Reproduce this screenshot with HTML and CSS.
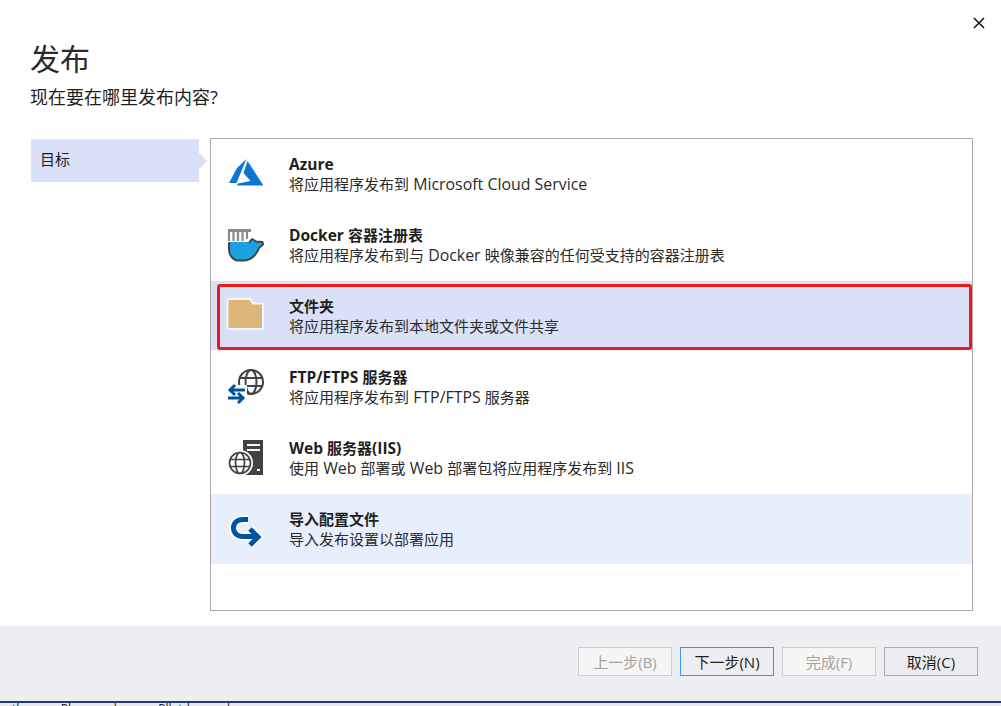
FILE: index.html
```html
<!DOCTYPE html>
<html lang="zh-CN">
<head>
<meta charset="utf-8">
<title>发布</title>
<link rel="stylesheet" href="styles.css">
</head>
<body>
<div class="dialog">
  <button class="close" aria-label="关闭">
    <svg width="12" height="12" viewBox="0 0 12 12"><path d="M1 1L11 11M11 1L1 11" stroke="#1a1a1a" stroke-width="1.6" fill="none"/></svg>
  </button>
  <header class="head">
    <h1 class="title">发布</h1>
    <p class="subtitle">现在要在哪里发布内容?</p>
  </header>
  <main class="main">
    <nav class="side">
      <div class="step">目标</div>
    </nav>
    <section class="panel">
      <div class="row">
        <svg class="icon" viewBox="0 0 40 40">
          <path d="M20.500 5L11 14L3 29H10.500Z" fill="#0a78d2"/>
          <path d="M21.500 7L17.500 19L24.500 27L12 29.500L11 31.500H37.500Z" fill="#0a78d2"/>
        </svg>
        <div class="text"><div class="name"><span class="en">Azure</span></div><div class="desc">将应用程序发布到<span class="en"> Microsoft Cloud Service</span></div></div>
      </div>
      <div class="row">
        <svg class="icon" viewBox="0 0 40 40">
          <path d="M2 4H25V7H2Z" fill="#8a8a8a"/>
          <path d="M3 7V16M7.500 7V16M12 7V16M16.500 7V16M21 7V14" stroke="#8a8a8a" stroke-width="2.200" fill="none"/>
          <path d="M3 18H23L26 14L30 16.500L36.500 17L37 19.500L33 23C30 31 24 35.500 18 35.500H12C7 35.500 3 30 3 24Z" fill="#1ba1e2" stroke="#424242" stroke-width="2" stroke-linejoin="round"/>
          <path d="M4 17H23V19.500H4Z" fill="#1ba1e2"/>
        </svg>
        <div class="text"><div class="name"><span class="en">Docker </span>容器注册表</div><div class="desc">将应用程序发布到与<span class="en"> Docker </span>映像兼容的任何受支持的容器注册表</div></div>
      </div>
      <div class="row selected">
        <svg class="icon" viewBox="0 0 40 40">
          <path d="M1.500 4.500Q1.500 3 3 3H24L27 7.500H36Q37 7.500 37 9V32Q37 33 36 33H3Q1.500 33 1.500 32Z" fill="#dcb67a" stroke="#f6f6f6" stroke-width="2"/>
        </svg>
        <div class="text"><div class="name">文件夹</div><div class="desc">将应用程序发布到本地文件夹或文件共享</div></div>
        <div class="mark"></div>
      </div>
      <div class="row">
        <svg class="icon" viewBox="0 0 40 40">
          <g fill="none" stroke="#424242" stroke-width="2">
            <circle cx="25" cy="15" r="12"/>
            <ellipse cx="25" cy="15" rx="5.500" ry="12"/>
            <path d="M14 11H36M14 19H36"/>
          </g>
          <path d="M1 18H21V37H1Z" fill="#fff"/>
          <g fill="none" stroke="#00539c" stroke-width="3">
            <path d="M4 23H19M9 18L4 23L9 28"/>
            <path d="M2 31H17M12 26L17 31L12 36"/>
          </g>
        </svg>
        <div class="text"><div class="name"><span class="en">FTP/FTPS </span>服务器</div><div class="desc">将应用程序发布到<span class="en"> FTP/FTPS </span>服务器</div></div>
      </div>
      <div class="row">
        <svg class="icon" viewBox="0 0 40 40">
          <path d="M17 2H37V37H17Z" fill="#424242"/>
          <path d="M21 6H34V8H21ZM21 11H34V13H21ZM31 31H34V33H31Z" fill="#f6f6f6"/>
          <circle cx="14" cy="25" r="13" fill="#fff"/>
          <g fill="none" stroke="#424242" stroke-width="1.700">
            <circle cx="14" cy="25" r="10.500"/>
            <ellipse cx="14" cy="25" rx="4.500" ry="10.500"/>
            <path d="M4 21.500H24M4 28.500H24"/>
          </g>
        </svg>
        <div class="text"><div class="name"><span class="en">Web </span>服务器<span class="en">(IIS)</span></div><div class="desc">使用<span class="en"> Web </span>部署或<span class="en"> Web </span>部署包将应用程序发布到<span class="en"> IIS</span></div></div>
      </div>
      <div class="row imported">
        <svg class="icon" viewBox="0 0 40 40">
          <g fill="none">
            <path d="M22 10.500H17C11 10.500 7.500 14 7.500 19C7.500 24 11.500 27.500 16 27.500H30" stroke="#fff" stroke-width="9"/>
            <path d="M24 20L32 28L24 36" stroke="#fff" stroke-width="9"/>
            <path d="M22 10.500H17C11 10.500 7.500 14 7.500 19C7.500 24 11.500 27.500 16 27.500H30" stroke="#00539c" stroke-width="5"/>
            <path d="M24 20L32 28L24 36" stroke="#00539c" stroke-width="5"/>
          </g>
        </svg>
        <div class="text"><div class="name">导入配置文件</div><div class="desc">导入发布设置以部署应用</div></div>
      </div>
    </section>
  </main>
  <footer class="foot">
    <button class="btn off">上一步(B)</button>
    <button class="btn primary">下一步(N)</button>
    <button class="btn off">完成(F)</button>
    <button class="btn">取消(C)</button>
  </footer>
  <div class="behind"><span class="behind-text">th Pl ch Pllatd h</span></div>
</div>
</body>
</html>
```
FILE: styles.css
```css
html, body {
  margin: 0;
  padding: 0;
  height: 100%;
  overflow: hidden;
  background: #fff;
}
.dialog {
  position: relative;
  width: 1001px;
  height: 706px;
  display: flex;
  flex-direction: column;
  font-family: "Open Sans", "Noto Sans CJK SC", sans-serif;
  color: #1e1e1e;
  overflow: hidden;
}
.close {
  position: absolute;
  top: 17px;
  right: 16px;
  width: 12px;
  height: 12px;
  padding: 0;
  border: 0;
  background: none;
  display: block;
}
.close svg { display: block; }
.head {
  height: 139px;
  padding: 41px 0 0 30px;
  box-sizing: border-box;
  flex: none;
}
.title {
  margin: 0;
  font-size: 30px;
  font-weight: 400;
  line-height: 36px;
  color: #2a2a2a;
}
.subtitle {
  margin: 6px 0 0;
  font-size: 18px;
  line-height: 28px;
}
.main {
  flex: none;
  height: 487px;
  display: flex;
  padding-left: 31px;
  box-sizing: border-box;
}
.side {
  width: 168px;
  margin-right: 11px;
  flex: none;
}
.step {
  position: relative;
  height: 43px;
  line-height: 41px;
  padding-left: 9px;
  background: #d9e0f7;
  font-size: 15px;
}
.step::after {
  content: "";
  position: absolute;
  left: 100%;
  top: 14px;
  border-left: 8px solid #d9e0f7;
  border-top: 8px solid transparent;
  border-bottom: 8px solid transparent;
}
.panel {
  width: 763px;
  height: 473px;
  margin-top: -1px;
  box-sizing: border-box;
  border: 1px solid #aaaaaa;
  display: flex;
  flex-direction: column;
  gap: 1px;
  background: #fff;
}
.row {
  position: relative;
  height: 70px;
  flex: none;
  display: flex;
  align-items: center;
  padding-left: 15px;
  box-sizing: border-box;
}
.icon {
  width: 40px;
  height: 40px;
  flex: none;
  margin-right: 23px;
}
.text {
  font-size: 15px;
  line-height: 20px;
}
.name { font-weight: 700; }
.name .en { font-size: 15.500px; }
.desc { color: #2a2a2a; }
.desc .en { font-size: 15.900px; }
.selected {
  height: 69px;
  margin-bottom: 1px;
  background: #d9e0f7;
}
.imported { background: #e8effc; }
.mark {
  position: absolute;
  left: 6px;
  right: 0;
  top: 3px;
  bottom: 0;
  border: 3px solid #f01818;
  border-radius: 3px;
}
.foot {
  flex: none;
  height: 77px;
  background: #eeeef2;
  border-bottom: 2px solid #1f3a78;
  display: flex;
  align-items: flex-start;
  justify-content: flex-end;
  gap: 8px;
  padding: 21px 23px 0 0;
  box-sizing: border-box;
}
.btn {
  width: 94px;
  height: 29px;
  box-sizing: border-box;
  border: 1px solid #acacac;
  background: #ececf0;
  color: #1e1e1e;
  font: 15px "Open Sans", "Noto Sans CJK SC", sans-serif;
  padding: 0;
}
.off {
  background: #f5f5f5;
  border-color: #ccccd8;
  color: #a2a2a2;
}
.primary {
  border-color: #3399ff;
  background: #eeeef2;
}
.behind {
  flex: 1;
  background: #e9e9e9;
  font-size: 12px;
  line-height: 14px;
  padding-left: 12px;
  overflow: hidden;
  white-space: nowrap;
}
.behind-text {
  display: block;
  margin-top: -1px;
  word-spacing: 34px;
  color: #222;
}
```
